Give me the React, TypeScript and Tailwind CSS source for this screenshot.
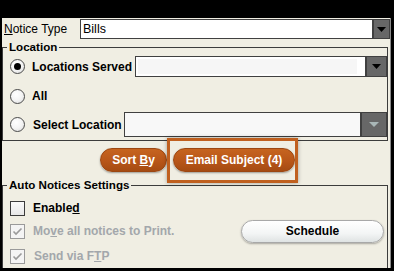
import React from "react";

function Tri({ color, w = 9, h = 5 }: { color: string; w?: number; h?: number }) {
  return (
    <svg width={w} height={h} viewBox={`0 0 ${w} ${h}`}>
      <polygon points={`0,0 ${w},0 ${w / 2},${h}`} fill={color} />
    </svg>
  );
}

function Radio({ checked }: { checked?: boolean }) {
  return (
    <div className="w-[15px] h-[15px] shrink-0 rounded-full border border-[#4a4a4a] bg-[radial-gradient(circle_at_40%_35%,#ffffff_0%,#f4f4f4_50%,#d8d8d8_100%)] flex items-center justify-center">
      {checked && <div className="w-[7px] h-[7px] rounded-full bg-black" />}
    </div>
  );
}

function Check({ checked, disabled }: { checked?: boolean; disabled?: boolean }) {
  return (
    <div
      className={
        "w-[15px] h-[15px] shrink-0 border flex items-center justify-center " +
        (disabled ? "border-[#9a9a9a] bg-[#f4f4f4]" : "border-[#3c3c3c] bg-[linear-gradient(#fafafa,#e8e8e8)]")
      }
    >
      {checked && (
        <svg width="11" height="9" viewBox="0 0 11 9">
          <polyline points="1.5,4.5 4,7 9.5,1.5" fill="none" stroke="#9a9a9a" strokeWidth="1.6" />
        </svg>
      )}
    </div>
  );
}

function OrangeBtn({ children, w }: { children: React.ReactNode; w: string }) {
  return (
    <div
      className={
        w +
        " h-[24px] rounded-full bg-[linear-gradient(#c6641f,#b85619_55%,#a54b12)] border border-[#9c4712] shadow-[0_1px_2px_rgba(0,0,0,0.35)] flex items-center justify-center text-white font-bold text-[12px]"
      }
    >
      {children}
    </div>
  );
}

export default function App() {
  return (
    <div className="relative w-[394px] h-[271px] bg-black overflow-hidden font-['Liberation_Sans',Arial,sans-serif] text-black">
      <div className="h-[18px]" />
      <div className="ml-[2px] w-[389px] h-[250px] bg-[#f0eee3] border-r border-[#8a8a8a] overflow-hidden">
        {/* Notice type */}
        <div className="mt-[1px] flex h-[20px]">
          <div className="w-[78px] pl-[2px] flex items-center text-[12px]">
            <span className="underline">N</span>otice Type
          </div>
          <div className="w-[293px] h-[20px] bg-white border border-[#404040] flex items-center pl-[2px] text-[12.5px]">
            Bills
          </div>
          <div className="w-[17px] h-[20px] bg-[#676767] border border-[#404040] flex items-center justify-center">
            <Tri color="#000" />
          </div>
        </div>

        {/* Location */}
        <fieldset className="mt-[1px] w-[386px] border border-[#3c3c3c] pb-[3px]">
          <legend className="ml-[4px] px-[2px] text-[11.6px] font-bold leading-[14px]">Location</legend>
          <div className="mt-[2px] flex h-[21px] items-center pl-[7px]">
            <Radio checked />
            <span className="ml-[7px] text-[12px] font-bold">Locations Served</span>
            <div className="ml-auto flex">
              <div className="w-[231px] h-[21px] bg-white border border-[#404040] p-[2px] pr-[8px]">
                <div className="w-full h-full bg-[#f6f6f6]" />
              </div>
              <div className="w-[21px] h-[21px] bg-[#676767] border border-[#404040] flex items-center justify-center">
                <Tri color="#000" />
              </div>
            </div>
          </div>
          <div className="flex h-[35px] pt-[3px] items-center pl-[7px]">
            <Radio />
            <span className="ml-[7px] text-[12px] font-bold">All</span>
          </div>
          <div className="flex h-[25px] items-center pl-[7px]">
            <Radio />
            <span className="ml-[8px] text-[12px] font-bold">Select Location</span>
            <div className="ml-auto flex">
              <div className="w-[237px] h-[25px] bg-[#f8f8f8] border border-[#404040]" />
              <div className="w-[26px] h-[25px] bg-[#676767] border border-[#404040] flex items-center justify-center">
                <Tri color="#a9b7b7" w={10} h={5} />
              </div>
            </div>
          </div>
        </fieldset>

        {/* Buttons */}
        <div className="mt-[7px] flex h-[24px] pl-[98px] gap-[6px]">
          <OrangeBtn w="w-[67px]">
            <span>
              Sort <span className="underline">B</span>y
            </span>
          </OrangeBtn>
          <OrangeBtn w="w-[122px]">Email Subject (4)</OrangeBtn>
        </div>

        {/* Auto notices */}
        <fieldset className="mt-[6px] w-[386px] border border-[#3c3c3c] pb-[20px]">
          <legend className="ml-[4px] px-[2px] text-[11.6px] font-bold leading-[14px]">Auto Notices Settings</legend>
          <div className="mt-[8px] flex h-[16px] items-center pl-[7px]">
            <Check />
            <span className="ml-[8px] text-[12px] font-bold">
              Enable<span className="underline">d</span>
            </span>
          </div>
          <div className="mt-[7px] flex h-[16px] items-center pl-[7px] pr-[3px]">
            <Check checked disabled />
            <span className="ml-[8px] text-[12px] font-bold text-[#a3a7ab]">
              Mo<span className="underline">v</span>e all notices to Print.
            </span>
            <div className="ml-auto w-[143px] h-[23px] shrink-0 rounded-full border border-[#a8a8a8] bg-[linear-gradient(#ffffff,#f3f5f5_60%,#dfe3e3)] shadow-[0_1px_2px_rgba(0,0,0,0.3)] flex items-center justify-center text-[12px] font-bold">
              Schedule
            </div>
          </div>
          <div className="mt-[9px] flex h-[16px] items-center pl-[7px]">
            <Check checked disabled />
            <span className="ml-[9px] text-[12px] font-bold text-[#a3a7ab]">
              Send via F<span className="underline">T</span>P
            </span>
          </div>
        </fieldset>
      </div>

      {/* highlight annotation */}
      <div className="absolute left-[167px] top-[138px] w-[131px] h-[45px] border-[3px] border-[#c0601f] shadow-[0_0_4px_rgba(0,0,0,0.35)]" />
    </div>
  );
}
